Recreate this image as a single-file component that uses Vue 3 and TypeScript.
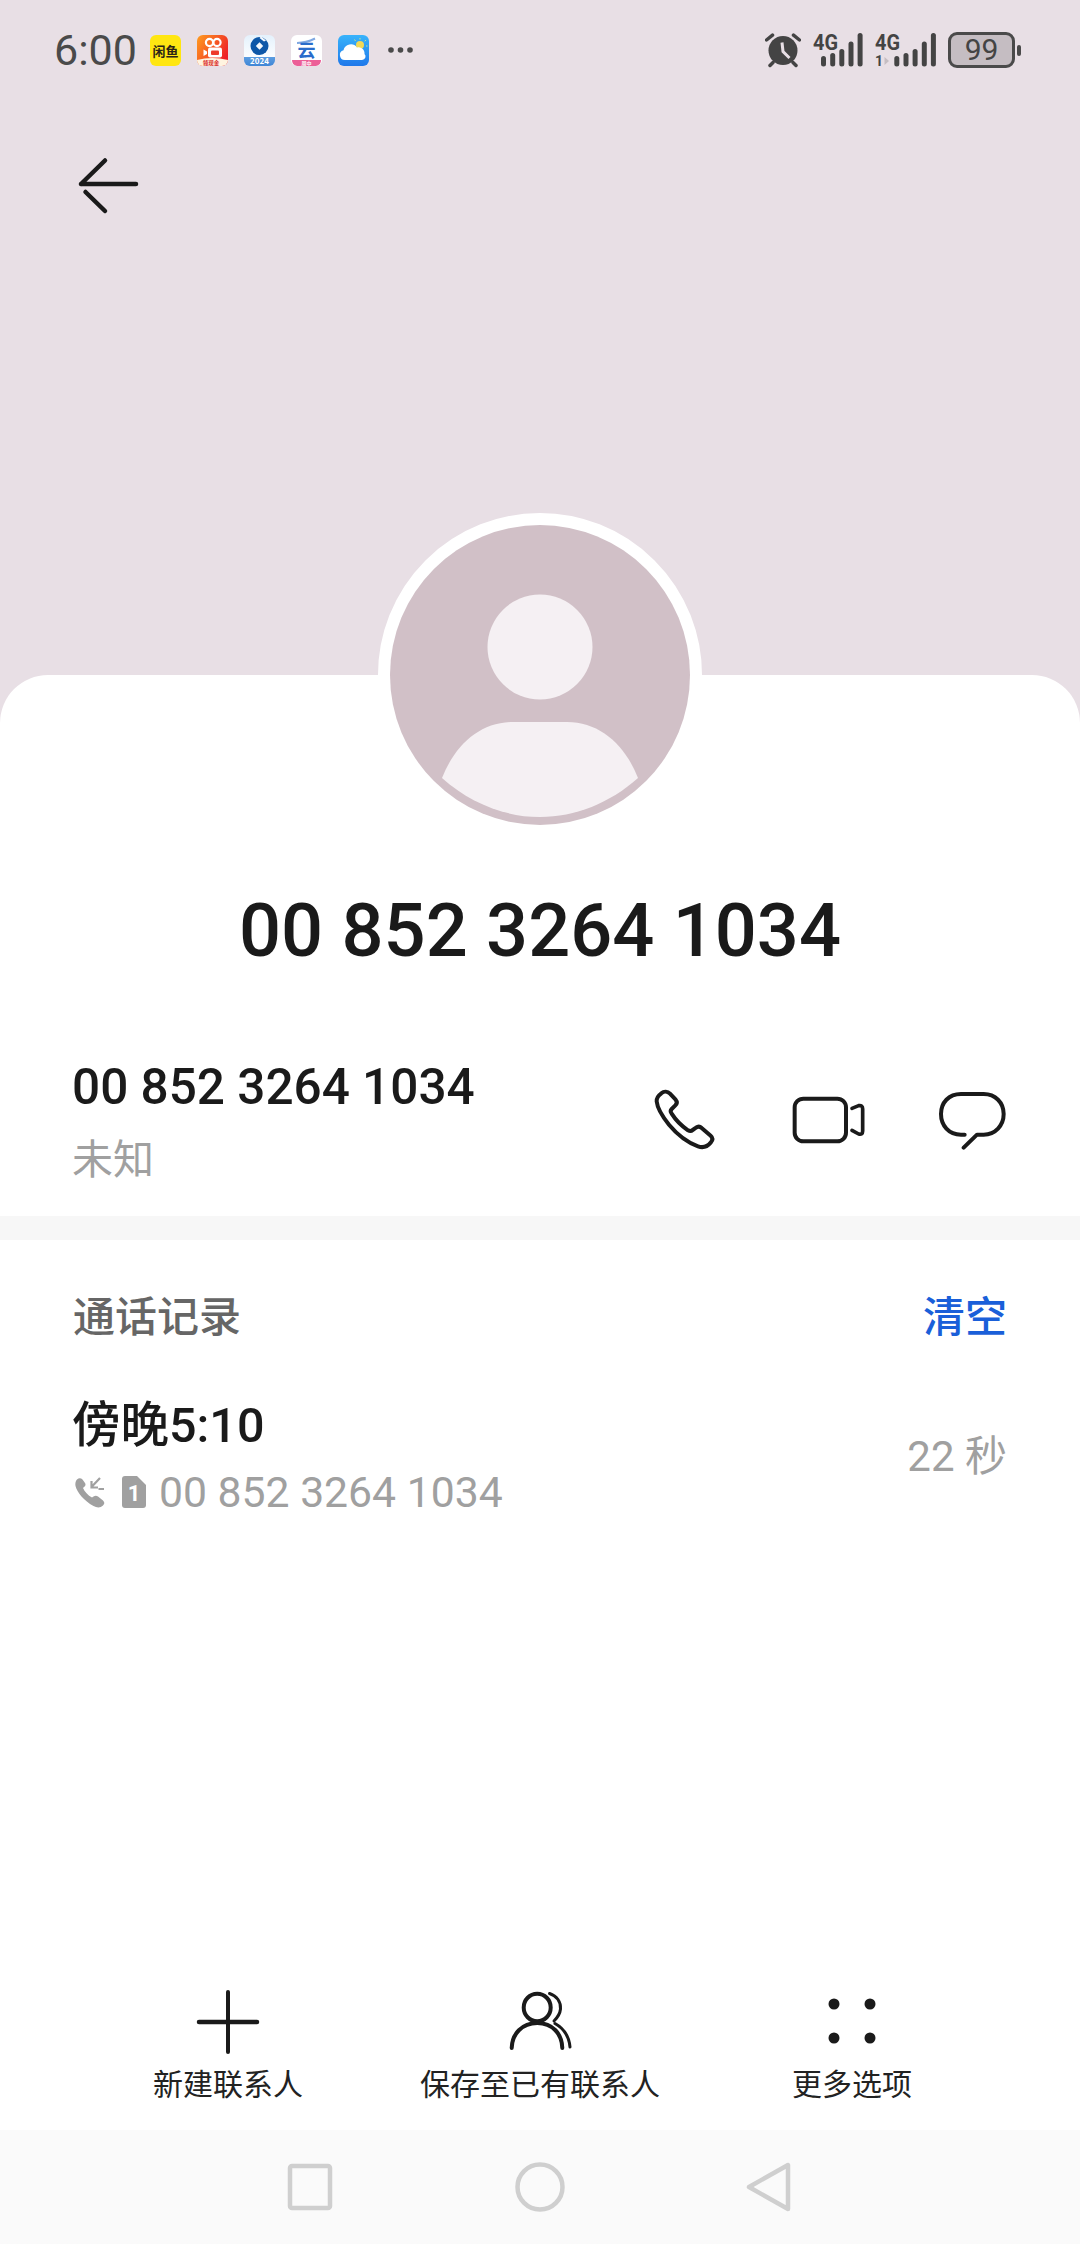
<script setup lang="ts">
const signalBars = [
  { x: 0, top: 23 },
  { x: 9.2, top: 20 },
  { x: 18.3, top: 16 },
  { x: 27.5, top: 8.5 },
  { x: 36.6, top: 0 },
]

const actions = [
  { key: 'add', label: '新建联系人' },
  { key: 'save', label: '保存至已有联系人' },
  { key: 'more', label: '更多选项' },
]

const phoneNumber = '00 852 3264 1034'
</script>

<template>
  <div class="page">
    <header class="top">
      <div class="status">
        <span class="clock">6:00</span>
        <div class="apps">
          <svg class="app" viewBox="0 0 31 31">
            <rect width="31" height="31" rx="6" fill="#ffe611" />
            <text x="15.5" y="20.5" text-anchor="middle" class="app-text" font-size="13" font-weight="700" fill="#2b2417">闲鱼</text>
          </svg>
          <svg class="app" viewBox="0 0 31 31">
            <defs>
              <linearGradient id="ks" x1="0" y1="0" x2="1" y2="0.6">
                <stop offset="0" stop-color="#ff9d1f" />
                <stop offset="1" stop-color="#ee2027" />
              </linearGradient>
            </defs>
            <rect width="31" height="31" rx="6" fill="url(#ks)" />
            <circle cx="12.5" cy="7.5" r="3.6" fill="none" stroke="#fff" stroke-width="2.2" />
            <circle cx="20" cy="7.5" r="3.6" fill="none" stroke="#fff" stroke-width="2.2" />
            <rect x="11" y="12.500" width="14" height="10" rx="2" fill="#fff" />
            <rect x="14" y="15.500" width="8" height="4.500" rx="1" fill="#ee3a2a" />
            <path d="M6.500 14.500 10 16.500V19L6.500 21Z" fill="#fff" />
            <path d="M0 25Q15 21 31 25V25A6 6 0 0 1 25 31H6A6 6 0 0 1 0 25Z" fill="#fff4e0" />
            <text x="14" y="29.500" text-anchor="middle" class="app-text" font-size="5.500" font-weight="700" fill="#d8261e">领现金</text>
          </svg>
          <svg class="app" viewBox="0 0 31 31">
            <defs>
              <linearGradient id="ccb" x1="0" y1="0" x2="0" y2="1">
                <stop offset="0" stop-color="#e4f1fc" />
                <stop offset="0.7" stop-color="#fbfdff" />
                <stop offset="0.72" stop-color="#5b9ce0" />
                <stop offset="1" stop-color="#3f86d6" />
              </linearGradient>
            </defs>
            <rect width="31" height="31" rx="6" fill="url(#ccb)" />
            <circle cx="15.500" cy="11" r="9" fill="#0d57a8" />
            <path d="M15.500 7.300 19.200 11 15.500 14.700 11.800 11Z" fill="#f4f9fe" />
            <path d="M17 1.500 22 5.500 20 6.500 15.500 3Z" fill="#f4f9fe" />
            <text x="15.500" y="29" text-anchor="middle" class="app-text" font-size="8" font-weight="700" fill="#fff">2024</text>
          </svg>
          <svg class="app" viewBox="0 0 31 31">
            <rect width="31" height="31" rx="6" fill="#fff" />
            <path d="M6 8Q15 8 24 3.500" fill="none" stroke="#7fa8e2" stroke-width="2" />
            <text x="15.500" y="21.500" text-anchor="middle" class="app-text" font-size="18" font-weight="700" fill="#2a6ccb">云</text>
            <path d="M1 25H30V25A6 6 0 0 1 25 31H6A6 6 0 0 1 1 25Z" fill="#ec5f97" />
            <text x="15.500" y="30" text-anchor="middle" class="app-text" font-size="5" font-weight="700" fill="#fff">周中</text>
          </svg>
          <svg class="app" viewBox="0 0 31 31">
            <defs>
              <linearGradient id="wx" x1="0" y1="0" x2="0" y2="1">
                <stop offset="0" stop-color="#38b3fb" />
                <stop offset="1" stop-color="#1f78ea" />
              </linearGradient>
            </defs>
            <rect width="31" height="31" rx="6" fill="url(#wx)" />
            <circle cx="22" cy="10" r="4" fill="#f2d957" />
            <path d="M22 3V4.500M28 5 26.700 6.200M29.500 11H28M16.500 4.500 17.500 6" stroke="#bfe58a" stroke-width="1" fill="none" />
            <path d="M7 25A5 5 0 0 1 5.500 15.200 7.500 7.500 0 0 1 19 12.500 6 6 0 0 1 26.500 19 3.500 3.500 0 0 1 24 25Z" fill="#fff" />
          </svg>
          <svg class="more-dots" viewBox="0 0 25 6">
            <circle cx="3" cy="3" r="2.800" />
            <circle cx="12.500" cy="3" r="2.800" />
            <circle cx="22" cy="3" r="2.800" />
          </svg>
        </div>

        <div class="indicators">
          <svg width="36" height="36" viewBox="0 0 36 36">
            <circle cx="18" cy="18.500" r="14.500" fill="#444" />
            <path d="M1.500 8 7.500 3.200M28.500 3.200 34.500 8M5 33.500 8 30.500M31 33.500 28 30.500" stroke="#444" stroke-width="3.500" stroke-linecap="round" fill="none" />
            <path d="M17 10.500 18 19.500 24.500 26" stroke="#e8dfe5" stroke-width="3" fill="none" />
          </svg>
          <svg class="signal" width="50" height="44" viewBox="0 -5 50 44">
            <text x="0" y="17" class="net" textLength="25" lengthAdjust="spacingAndGlyphs">4G</text>
            <g transform="translate(8 0)">
              <rect v-for="b in signalBars" :key="b.x" :x="b.x" :y="b.top" width="5" :height="33.500 - b.top" rx="2.500" fill="#444" />
            </g>
          </svg>
          <svg class="signal" width="61" height="44" viewBox="0 -5 61 44">
            <text x="0" y="17" class="net" textLength="25" lengthAdjust="spacingAndGlyphs">4G</text>
            <text x="0" y="33" class="net net-small">1</text>
            <path d="M9.500 24 14 28 9.500 32Z" fill="#c5bdc2" />
            <g transform="translate(19.300 0)">
              <rect v-for="b in signalBars" :key="b.x" :x="b.x" :y="b.top" width="5" :height="33.500 - b.top" rx="2.500" fill="#444" />
            </g>
          </svg>
          <div class="battery">
            <div class="battery-body">99</div>
            <div class="battery-nub"></div>
          </div>
        </div>
      </div>

      <svg class="back" width="70" height="70" viewBox="0 0 70 70">
        <path d="M9 34H64M9 34 33 10.500M13.500 42 33 61" fill="none" stroke="#1a1a1a" stroke-width="4.500" stroke-linecap="round" />
      </svg>
    </header>

    <main class="card">
      <div class="avatar">
        <svg width="300" height="300" viewBox="0 0 300 300">
          <circle cx="150" cy="150" r="150" fill="#d1c0c7" />
          <circle cx="150" cy="122" r="52.500" fill="#f5f0f3" />
          <path d="M52 253C65 220 90 197 123 197H177C210 197 235 220 248 253 220 278 185 292 150 292 115 292 80 278 52 253Z" fill="#f5f0f3" />
        </svg>
      </div>

      <h1 class="title">{{ phoneNumber }}</h1>

      <section class="contact">
        <div class="contact-info">
          <div class="contact-number">{{ phoneNumber }}</div>
          <div class="contact-place">未知</div>
        </div>
        <div class="contact-icons">
          <svg class="ic-phone" width="64" height="64" viewBox="100 115 192 192">
            <path d="M122 131C130 124 141 125 148 132L165 150C170 156 169 162 164 167L153 178C149 182 150 188 153 192 165 211 183 229 202 242 207 245 212 245 216 241L226 234C231 230 238 230 243 235L270 258C277 264 276 272 270 279 260 291 246 295 232 290 200 278 170 255 145 225 125 200 110 175 108 155 107 145 114 137 122 131Z" fill="none" stroke="#1a1a1a" stroke-width="12" stroke-linejoin="round" />
          </svg>
          <svg class="ic-video" width="76" height="50" viewBox="512 135 228 150">
            <rect x="523" y="146" width="154" height="128" rx="26" fill="none" stroke="#1a1a1a" stroke-width="12" />
            <path d="M695 175 715 167Q727 165 727 177V243Q727 255 715 252L695 241" fill="none" stroke="#1a1a1a" stroke-width="11" stroke-linecap="round" stroke-linejoin="round" />
          </svg>
          <svg class="ic-chat" width="70" height="60" viewBox="950 122 210 180">
            <path d="M1033 256H1022C985 256 962 228 962 194 962 160 985 134 1022 134H1090C1125 134 1150 160 1150 194 1150 228 1125 256 1090 256H1070L1030 295" fill="none" stroke="#1a1a1a" stroke-width="12" stroke-linecap="round" stroke-linejoin="round" />
          </svg>
        </div>
      </section>

      <div class="divider"></div>

      <section class="history">
        <div class="history-head">
          <span class="history-title">通话记录</span>
          <span class="history-clear">清空</span>
        </div>
        <div class="call">
          <div class="call-main">
            <div class="call-time">傍晚5:10</div>
            <div class="call-sub">
              <svg width="32" height="32" viewBox="0 0 32 32" class="call-icon">
                <path d="M3 3.500C5 1.500 7 2 8.500 3.500L11 7C12 8.500 11.500 10 10 11L9 12C10.500 15.500 14 19.500 18 21.500L19.500 20.500C21 19.500 22.500 19.500 24 20.500L29 24.500C31 26.500 30.500 28 29 29.500 26.500 32 23 32 19.500 30 10 25 3 16 1.500 10 1 7.500 1.500 5 3 3.500Z" fill="#a0a0a0" />
                <path d="M26 2 17.500 11M17.500 5V11.500H24M30 13H24.500" fill="none" stroke="#a0a0a0" stroke-width="2.200" />
              </svg>
              <svg width="24" height="32" viewBox="0 0 24 32" class="sim-icon">
                <path d="M3 0H15L24 9V29A3 3 0 0 1 21 32H3A3 3 0 0 1 0 29V3A3 3 0 0 1 3 0Z" fill="#a0a0a0" />
                <text x="12" y="25" text-anchor="middle" class="sim-text">1</text>
              </svg>
              <span class="call-number">{{ phoneNumber }}</span>
            </div>
          </div>
          <div class="call-length">22 秒</div>
        </div>
      </section>

      <footer class="actions">
        <div v-for="a in actions" :key="a.key" class="action">
          <svg width="64" height="64" viewBox="0 0 64 64">
            <template v-if="a.key === 'add'">
              <path d="M32 2V62" stroke="#1a1a1a" stroke-width="4" stroke-linecap="round" />
              <path d="M3 32H61" stroke="#1a1a1a" stroke-width="4.500" stroke-linecap="round" />
            </template>
            <template v-else-if="a.key === 'save'">
              <ellipse cx="29.200" cy="17.500" rx="13.500" ry="13.800" fill="none" stroke="#1a1a1a" stroke-width="4" />
              <path d="M3.700 58C4 44 14 33 29.300 33 44.600 33 54 44 54.300 58" fill="none" stroke="#1a1a1a" stroke-width="4" stroke-linecap="round" />
              <path d="M41.500 3.500C49 6 53 12 52.500 19 52 24 49 28 46 31" fill="none" stroke="#1a1a1a" stroke-width="3" stroke-linecap="round" />
              <path d="M47 33.500C55 38 61 46 62 57" fill="none" stroke="#1a1a1a" stroke-width="3" stroke-linecap="round" />
            </template>
            <template v-else>
              <circle cx="14" cy="14" r="5.500" fill="#1a1a1a" />
              <circle cx="50" cy="14" r="5.500" fill="#1a1a1a" />
              <circle cx="14" cy="48" r="5.500" fill="#1a1a1a" />
              <circle cx="50" cy="48" r="5.500" fill="#1a1a1a" />
            </template>
          </svg>
          <span class="action-label">{{ a.label }}</span>
        </div>
      </footer>
    </main>

    <nav class="nav">
      <svg width="48" height="48" viewBox="0 0 48 48">
        <rect x="4" y="3" width="40" height="42" rx="2" fill="none" stroke="#cfcfcf" stroke-width="4.500" />
      </svg>
      <svg width="50" height="50" viewBox="0 0 50 50">
        <circle cx="25" cy="25" r="22.500" fill="none" stroke="#cfcfcf" stroke-width="4.500" />
      </svg>
      <svg width="48" height="52" viewBox="0 0 48 52">
        <path d="M42 4V48L3 26Z" fill="none" stroke="#cfcfcf" stroke-width="4.500" stroke-linejoin="round" />
      </svg>
    </nav>
  </div>
</template>

<style>
html,
body {
  margin: 0;
  background: #fff;
}
</style>

<style scoped>
.page {
  width: 1080px;
  height: 2244px;
  display: flex;
  flex-direction: column;
  overflow: hidden;
  background: #fff;
  font-family: Roboto, "Noto Sans CJK SC", sans-serif;
}

.top {
  height: 723px;
  flex: none;
  background: #e8dfe5;
}

.status {
  height: 100px;
  padding: 0 59px 0 54px;
  display: flex;
  align-items: center;
  color: #4a4a4a;
}

.clock {
  font-size: 43px;
  line-height: 1;
}

.apps {
  display: flex;
  align-items: center;
  gap: 16px;
  margin-left: 13px;
}

.app {
  width: 31px;
  height: 31px;
  display: block;
}

.app-text {
  font-family: "Noto Sans CJK SC", Roboto, sans-serif;
}

.more-dots {
  width: 25px;
  height: 6px;
  margin-left: 3px;
  fill: #4a4a4a;
}

.indicators {
  margin-left: auto;
  display: flex;
  align-items: center;
  gap: 12px;
}

.signal {
  display: block;
}

.net {
  font-family: Roboto, sans-serif;
  font-size: 22px;
  font-weight: 700;
  fill: #444;
}

.net-small {
  font-size: 14px;
}

.battery {
  display: flex;
  align-items: center;
  gap: 2px;
}

.battery-body {
  width: 67px;
  height: 36px;
  box-sizing: border-box;
  border: 3px solid #4a4a4a;
  border-radius: 9px;
  background: #c5bdc2;
  color: #444;
  font-size: 30px;
  line-height: 30px;
  text-align: center;
}

.battery-nub {
  width: 4px;
  height: 11px;
  border-radius: 2px;
  background: #4a4a4a;
}

.back {
  display: block;
  margin: 50px 0 0 72px;
}

.card {
  flex: 1;
  min-height: 0;
  margin-top: -48px;
  display: flex;
  flex-direction: column;
  background: #fff;
  border-radius: 48px 48px 0 0;
  position: relative;
}

.avatar {
  width: 300px;
  height: 300px;
  margin: -162px auto 0;
  border: 12px solid #fff;
  border-radius: 50%;
  background: #fff;
}

.avatar svg {
  display: block;
}

.title {
  margin: 50px 0 0;
  color: #1a1a1a;
  font-size: 74px;
  font-weight: 500;
  line-height: 88px;
  text-align: center;
}

.contact {
  height: 241px;
  flex: none;
  box-sizing: border-box;
  padding: 82px 73px 0 72px;
  display: flex;
  justify-content: space-between;
}

.contact-number {
  color: #1a1a1a;
  font-size: 49.5px;
  font-weight: 500;
  line-height: 60px;
}

.contact-place {
  margin-top: 13px;
  color: #a0a0a0;
  font-size: 41px;
  line-height: 60px;
}

.contact-icons {
  display: flex;
  align-items: center;
  height: 64px;
  margin-top: 31px;
}

.ic-phone {
  margin-right: 73px;
}

.ic-video {
  margin-right: 70px;
}

.divider {
  height: 24px;
  flex: none;
  background: #f7f7f7;
}

.history {
  padding: 53px 73px 0;
}

.history-head {
  display: flex;
  justify-content: space-between;
  font-size: 42px;
  font-weight: 500;
  line-height: 50px;
}

.history-title {
  color: #666;
}

.history-clear {
  color: #1a5fd9;
}

.call {
  margin-top: 53px;
  display: flex;
  align-items: center;
  justify-content: space-between;
}

.call-main {
  margin-left: -1px;
}

.call-time {
  color: #1a1a1a;
  font-size: 48.5px;
  font-weight: 500;
  line-height: 60px;
}

.call-sub {
  margin-top: 8px;
  display: flex;
  align-items: center;
  height: 56px;
}

.call-icon {
  margin-left: 2px;
}

.sim-icon {
  margin-left: 16px;
}

.sim-text {
  font-family: Roboto, sans-serif;
  font-size: 22px;
  font-weight: 700;
  fill: #fff;
}

.call-number {
  margin-left: 13px;
  color: #a0a0a0;
  font-size: 42.700px;
  line-height: 56px;
}

.call-length {
  margin-bottom: 2px;
  color: #a0a0a0;
  font-size: 42px;
  line-height: 56px;
}

.actions {
  margin-top: auto;
  padding: 0 72px 25px;
  display: grid;
  grid-template-columns: repeat(3, 312px);
}

.action {
  display: flex;
  flex-direction: column;
  align-items: center;
  gap: 11px;
}

.action svg {
  display: block;
}

.action-label {
  color: #222;
  font-size: 30px;
  line-height: 40px;
}

.nav {
  height: 114px;
  flex: none;
  padding: 0 195px;
  display: grid;
  grid-template-columns: repeat(3, 230px);
  justify-items: center;
  align-items: center;
  background: #fafafa;
}
</style>
